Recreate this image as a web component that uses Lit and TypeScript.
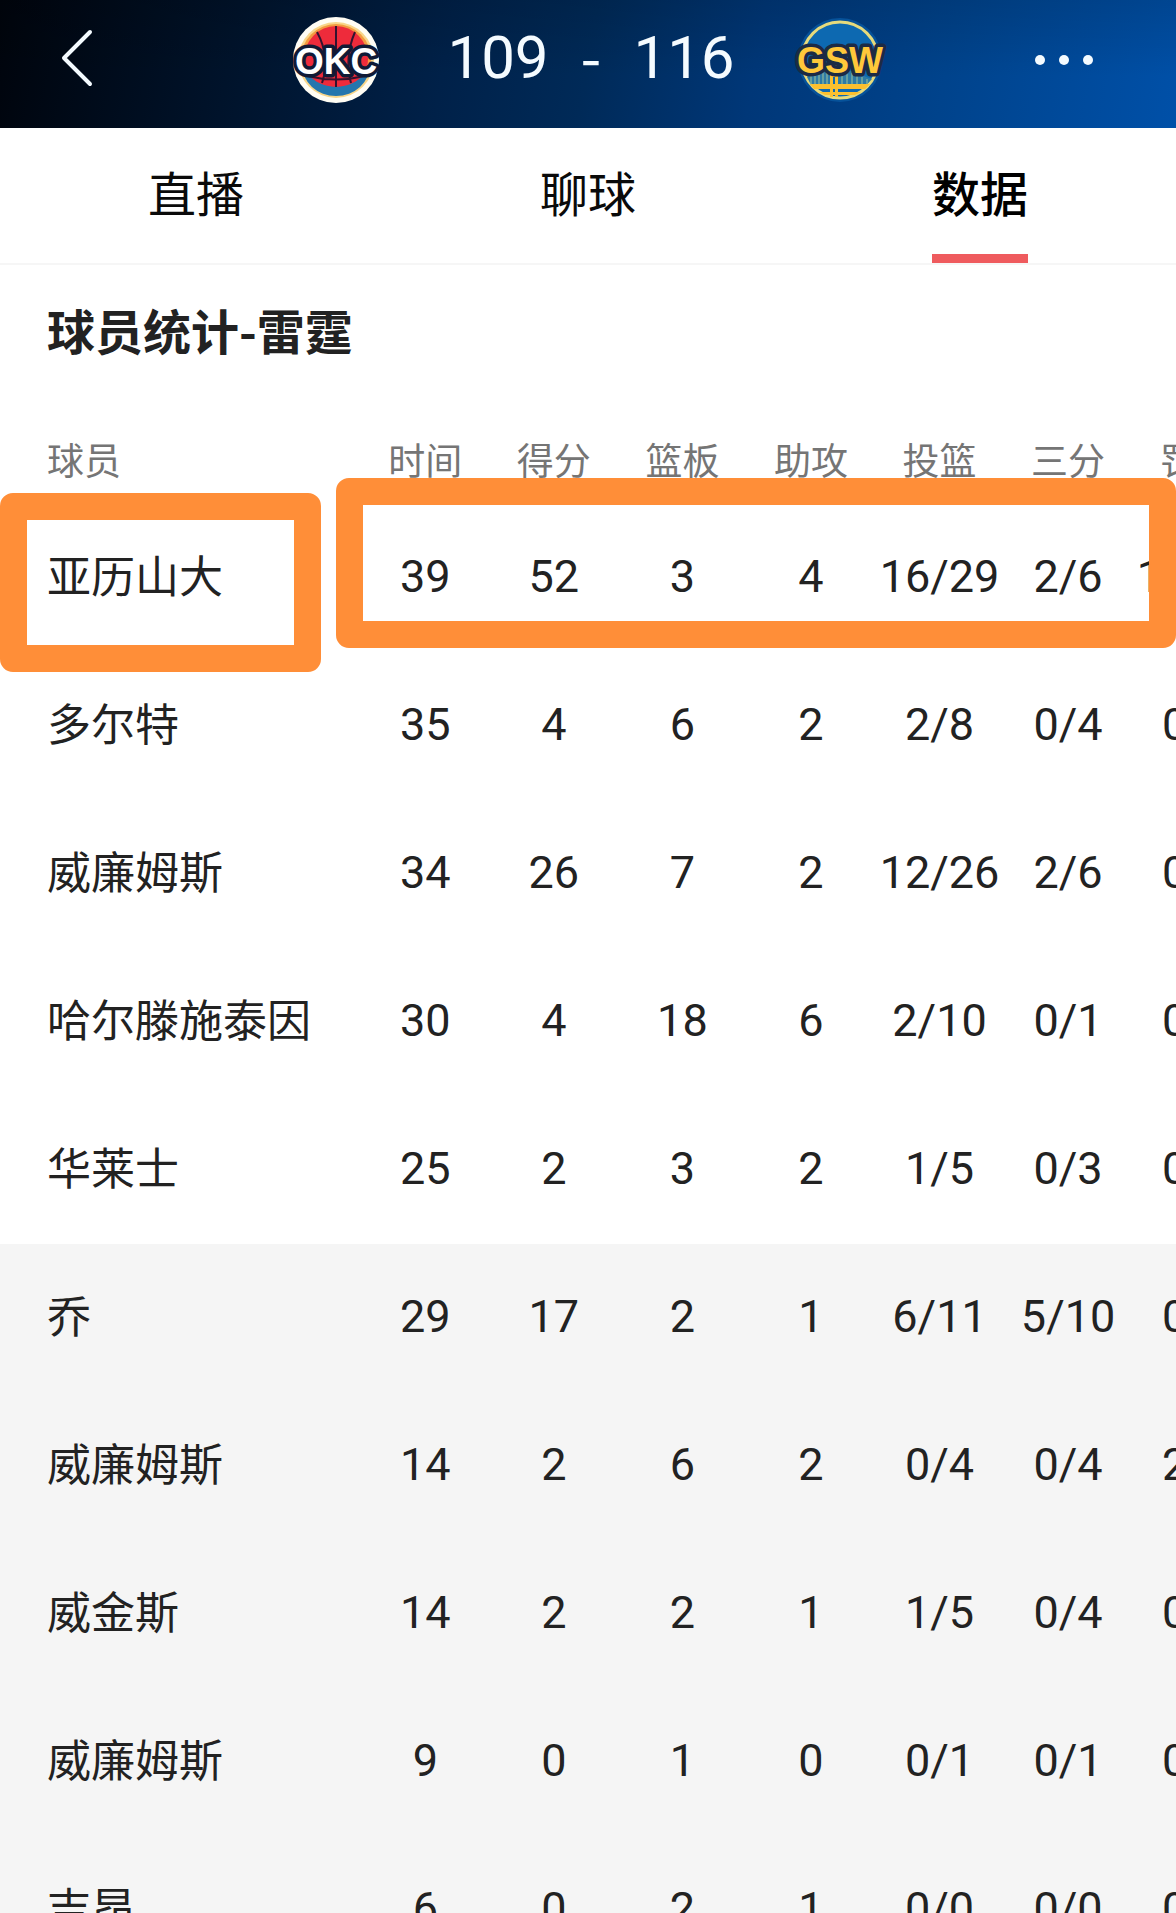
import { LitElement, html, css, svg } from "lit";
import { customElement, property, state } from "lit/decorators.js";
import { classMap } from "lit/directives/class-map.js";

interface PlayerLine {
  name: string;
  stats: string[];
}

const COLUMNS = ["时间", "得分", "篮板", "助攻", "投篮", "三分", "罚球"];

const STARTERS: PlayerLine[] = [
  { name: "亚历山大", stats: ["39", "52", "3", "4", "16/29", "2/6", "18/19"] },
  { name: "多尔特", stats: ["35", "4", "6", "2", "2/8", "0/4", "0/0"] },
  { name: "威廉姆斯", stats: ["34", "26", "7", "2", "12/26", "2/6", "0/0"] },
  { name: "哈尔滕施泰因", stats: ["30", "4", "18", "6", "2/10", "0/1", "0/0"] },
  { name: "华莱士", stats: ["25", "2", "3", "2", "1/5", "0/3", "0/0"] },
];

const BENCH: PlayerLine[] = [
  { name: "乔", stats: ["29", "17", "2", "1", "6/11", "5/10", "0/0"] },
  { name: "威廉姆斯", stats: ["14", "2", "6", "2", "0/4", "0/4", "2/2"] },
  { name: "威金斯", stats: ["14", "2", "2", "1", "1/5", "0/4", "0/0"] },
  { name: "威廉姆斯", stats: ["9", "0", "1", "0", "0/1", "0/1", "0/0"] },
  { name: "吉昂", stats: ["6", "0", "2", "1", "0/0", "0/0", "0/0"] },
];

const TABS = ["直播", "聊球", "数据"];

const thunderArt = svg`
  <circle cx="43" cy="43" r="43" fill="#fffdf4" />
  <circle cx="43" cy="43" r="38" fill="#f8d68a" />
  <circle cx="43" cy="42" r="35" fill="#f39a40" />
  <path d="M9 48a34 31 0 0 0 68 0z" fill="#2476ae" />
  <path d="M12 48a32 25 0 0 0 62 0z" fill="#f4e6ee" />
  <path d="M11 42a32 33 0 0 1 64 0c0 37-64 37-64 0z" fill="#ee2b3b" />
  <path d="M43 9v61M24 15c10 18 10 37 5 51M62 15c-8 18-8 37-4 51M14 59q29 7 58 0"
    fill="none" stroke="#33132f" stroke-width="2" />
  <text class="mark okc" x="43" y="57" text-anchor="middle">OKC</text>`;

const warriorsArt = svg`
  <circle cx="43" cy="43" r="42" fill="#06529a" />
  <circle cx="43" cy="43" r="38" fill="#0d69b1" stroke="#e6db7c" stroke-width="3" />
  <path d="M10 60 34 48v20H14zM38 48l37 14-6 6H38z" fill="#2d7ba6" />
  <path d="M14 68V59M18 68V57M22 68V55M26 68V53M30 68V51M45 68V52M50 68V54M55 68V56M60 68V58M65 68V60M70 68V62"
    stroke="#9fc49a" stroke-width="1" />
  <path d="M13 67h60l-5 5H17zM22 75h42l-6 3H28z" fill="#fbc02f" />
  <path d="M33 48h3v32h-3zM38 48h3v32h-3zM33 58h8v2h-8z" fill="#fbc02f" />
  <text class="mark gsw" x="43" y="56" text-anchor="middle">GSW</text>`;

@customElement("team-logo")
export class TeamLogo extends LitElement {
  @property() team = "OKC";

  static styles = css`
    :host {
      display: block;
      flex: none;
    }
    .logo {
      display: block;
      width: 86px;
      height: 86px;
      overflow: visible;
    }
    .mark {
      font-family: "Liberation Sans", Arial, sans-serif;
      font-weight: 700;
      font-size: 37px;
      stroke-width: 7px;
      stroke-linejoin: round;
      paint-order: stroke;
    }
    .okc {
      fill: #ffffff;
      stroke: #101a36;
    }
    .gsw {
      font-size: 36px;
      fill: #ffc83a;
      stroke: #1c2b45;
    }
  `;

  render() {
    return html`<svg class="logo" viewBox="0 0 86 86" role="img" aria-label=${this.team}>
      ${this.team === "OKC" ? thunderArt : warriorsArt}
    </svg>`;
  }
}

@customElement("match-header")
export class MatchHeader extends LitElement {
  static styles = css`
    :host {
      display: block;
      flex: none;
    }
    .bar {
      display: grid;
      grid-template-columns: 1fr auto 1fr;
      align-items: center;
      height: 128px;
      padding: 0 48px 8px;
      box-sizing: border-box;
      color: #f4fbff;
      background:
        linear-gradient(180deg, rgba(0, 0, 0, 0.12), rgba(0, 20, 60, 0) 60%),
        linear-gradient(100deg, #00040c 0%, #00132b 20%, #002149 38%, #002a58 50%, #003778 64%, #00438c 80%, #0050a8 100%);
    }
    .tool {
      display: flex;
      align-items: center;
      justify-content: center;
      height: 88px;
      padding: 0;
      border: 0;
      background: none;
      color: inherit;
    }
    .back {
      width: 58px;
      padding-bottom: 4px;
    }
    .more {
      justify-self: end;
      width: 128px;
    }
    .match {
      display: flex;
      align-items: center;
    }
    .score {
      display: flex;
      align-items: center;
      gap: 32px;
      padding: 0 62px 4px 68px;
      font-family: Roboto, sans-serif;
      font-size: 60px;
      line-height: 80px;
    }
    .dash {
      padding-bottom: 8px;
      font-family: "Noto Sans CJK SC", sans-serif;
    }
  `;

  render() {
    return html`
      <header class="bar">
        <button class="tool back" aria-label="返回">
          <svg width="34" height="60" viewBox="0 0 34 60" fill="none" stroke="currentColor" stroke-width="4" stroke-linecap="round" stroke-linejoin="round">
            <path d="M30 4 4 30l26 26" />
          </svg>
        </button>
        <div class="match">
          <team-logo team="OKC"></team-logo>
          <div class="score"><span>109</span><span class="dash">-</span><span>116</span></div>
          <team-logo team="GSW"></team-logo>
        </div>
        <button class="tool more" aria-label="更多">
          <svg width="60" height="12" viewBox="0 0 60 12" fill="currentColor">
            <circle cx="6" cy="6" r="5" />
            <circle cx="30" cy="6" r="5" />
            <circle cx="54" cy="6" r="5" />
          </svg>
        </button>
      </header>
    `;
  }
}

@customElement("stats-board")
export class StatsBoard extends LitElement {
  static styles = css`
    :host {
      display: block;
    }
    .title {
      margin: 0;
      padding: 28px 47px 53px;
      font-size: 48px;
      line-height: 72px;
      font-weight: 700;
      color: #222222;
    }
    .board {
      position: relative;
    }
    .scroller {
      overflow-x: auto;
      scrollbar-width: none;
    }
    .table {
      width: 100%;
      min-width: 1261px;
      table-layout: fixed;
      border-collapse: collapse;
      color: #222222;
    }
    .head,
    .cell {
      box-sizing: border-box;
      padding: 0 0 4px;
      font-weight: 400;
      text-align: center;
      white-space: nowrap;
    }
    .head {
      height: 86px;
      font-size: 37px;
      line-height: 48px;
      color: #757575;
    }
    .cell {
      height: 148px;
      padding-bottom: 2px;
      font-family: Roboto, sans-serif;
      font-size: 45px;
      line-height: 60px;
    }
    .name {
      width: 361px;
      padding-left: 47px;
      text-align: left;
    }
    .cell.name {
      padding-bottom: 8px;
      font-family: inherit;
      font-size: 44px;
    }
    .bench {
      background: #f5f5f5;
    }
    .frame {
      position: absolute;
      box-sizing: border-box;
      border: 27px solid #ff8e38;
      border-radius: 13px;
      pointer-events: none;
    }
    .frame-name {
      top: 75px;
      left: 0;
      width: 321px;
      height: 179px;
    }
    .frame-stats {
      top: 60px;
      left: 336px;
      right: 0;
      height: 170px;
    }
  `;

  private renderRow(player: PlayerLine) {
    return html`<tr>
      <th class="cell name" scope="row">${player.name}</th>
      ${player.stats.map((value) => html`<td class="cell">${value}</td>`)}
    </tr>`;
  }

  render() {
    return html`
      <h2 class="title">球员统计-雷霆</h2>
      <div class="board">
        <div class="scroller">
          <table class="table">
            <thead>
              <tr>
                <th class="head name" scope="col">球员</th>
                ${COLUMNS.map((label) => html`<th class="head" scope="col">${label}</th>`)}
              </tr>
            </thead>
            <tbody>
              ${STARTERS.map((player) => this.renderRow(player))}
            </tbody>
            <tbody class="bench">
              ${BENCH.map((player) => this.renderRow(player))}
            </tbody>
          </table>
        </div>
        <div class="frame frame-name"></div>
        <div class="frame frame-stats"></div>
      </div>
    `;
  }
}

@customElement("app-root")
export class AppRoot extends LitElement {
  @state() private active = "数据";

  static styles = css`
    :host {
      display: flex;
      flex-direction: column;
      height: 100vh;
      overflow: hidden;
      background: #ffffff;
      font-family: "Noto Sans CJK SC", "Noto Sans", sans-serif;
    }
    .tabs {
      display: grid;
      grid-template-columns: repeat(3, 1fr);
      flex: none;
      border-bottom: 2px solid #f6f6f6;
    }
    .tab {
      display: flex;
      flex-direction: column;
      align-items: center;
      padding: 27px 0 0;
      border: 0;
      background: none;
      color: #0a0a0a;
      font-family: inherit;
      font-size: 48px;
      line-height: 72px;
      font-weight: 400;
    }
    .tab::after {
      content: "";
      width: 96px;
      height: 9px;
      margin-top: 27px;
    }
    .tab.active {
      font-weight: 500;
      color: #000000;
    }
    .tab.active::after {
      background: #ef5b5e;
    }
    .content {
      flex: 1;
      min-height: 0;
      overflow-y: auto;
      scrollbar-width: none;
    }
  `;

  render() {
    return html`
      <match-header></match-header>
      <nav class="tabs" role="tablist">
        ${TABS.map(
          (label) => html`<button
            role="tab"
            aria-selected=${this.active === label}
            class=${classMap({ tab: true, active: this.active === label })}
            @click=${() => (this.active = label)}
          >${label}</button>`
        )}
      </nav>
      <main class="content"><stats-board></stats-board></main>
    `;
  }
}
